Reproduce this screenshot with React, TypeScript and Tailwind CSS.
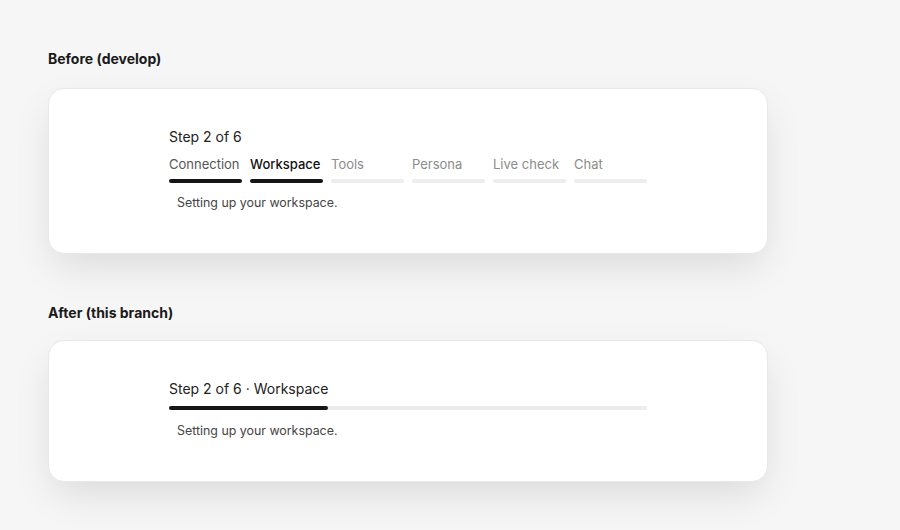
import React from "react";

const STEPS = ["Connection", "Workspace", "Tools", "Persona", "Live check", "Chat"];
const CURRENT = 1;

function Card({ children }: { children: React.ReactNode }) {
  return (
    <div className="w-[720px] rounded-2xl border border-[#e8e8e8] bg-white pt-[38px] pb-10 shadow-[0_16px_40px_-6px_rgba(0,0,0,0.12)]">
      <div className="mx-auto w-[478px]">{children}</div>
    </div>
  );
}

function SegmentedSteps() {
  return (
    <>
      <div className="text-sm leading-5 text-[#222]">Step {CURRENT + 1} of {STEPS.length}</div>
      <div className="mt-2 grid grid-cols-6 gap-2">
        {STEPS.map((label, i) => (
          <div key={label} className="flex flex-col">
            <span
              className={
                "text-[13px] leading-[18px] whitespace-nowrap " +
                (i === CURRENT
                  ? "font-medium text-[#111]"
                  : i < CURRENT
                  ? "text-[#555]"
                  : "text-[#8c8c8c]")
              }
            >
              {label}
            </span>
            <div
              className={
                "mt-1.5 h-1 rounded-full " + (i <= CURRENT ? "bg-[#161616]" : "bg-[#ededed]")
              }
            />
          </div>
        ))}
      </div>
      <p className="mt-2.5 px-2 text-[12.4px] leading-5 text-[#444]">Setting up your workspace.</p>
    </>
  );
}

function SingleBar() {
  const pct = ((CURRENT + 1) / STEPS.length) * 100;
  return (
    <>
      <div className="text-sm leading-5 text-[#222]">
        Step {CURRENT + 1} of {STEPS.length} · {STEPS[CURRENT]}
      </div>
      <div className="mt-[7px] h-1 rounded-full bg-[#ededed]">
        <div className="h-1 rounded-full bg-[#161616]" style={{ width: `${pct}%` }} />
      </div>
      <p className="mt-[11px] px-2 text-[12.4px] leading-5 text-[#444]">Setting up your workspace.</p>
    </>
  );
}

export default function App() {
  return (
    <div
      className="min-h-[530px] w-full bg-[#f6f6f6] pl-12 pt-[49px]"
      style={{ fontFamily: "Inter, 'Liberation Sans', sans-serif" }}
    >
      <h2 className="mb-[19px] text-sm font-bold leading-5 text-[#1a1a1a]">Before (develop)</h2>
      <Card>
        <SegmentedSteps />
      </Card>
      <h2 className="mt-[49px] mb-[17px] text-sm font-bold leading-5 text-[#1a1a1a]">
        After (this branch)
      </h2>
      <Card>
        <SingleBar />
      </Card>
    </div>
  );
}
